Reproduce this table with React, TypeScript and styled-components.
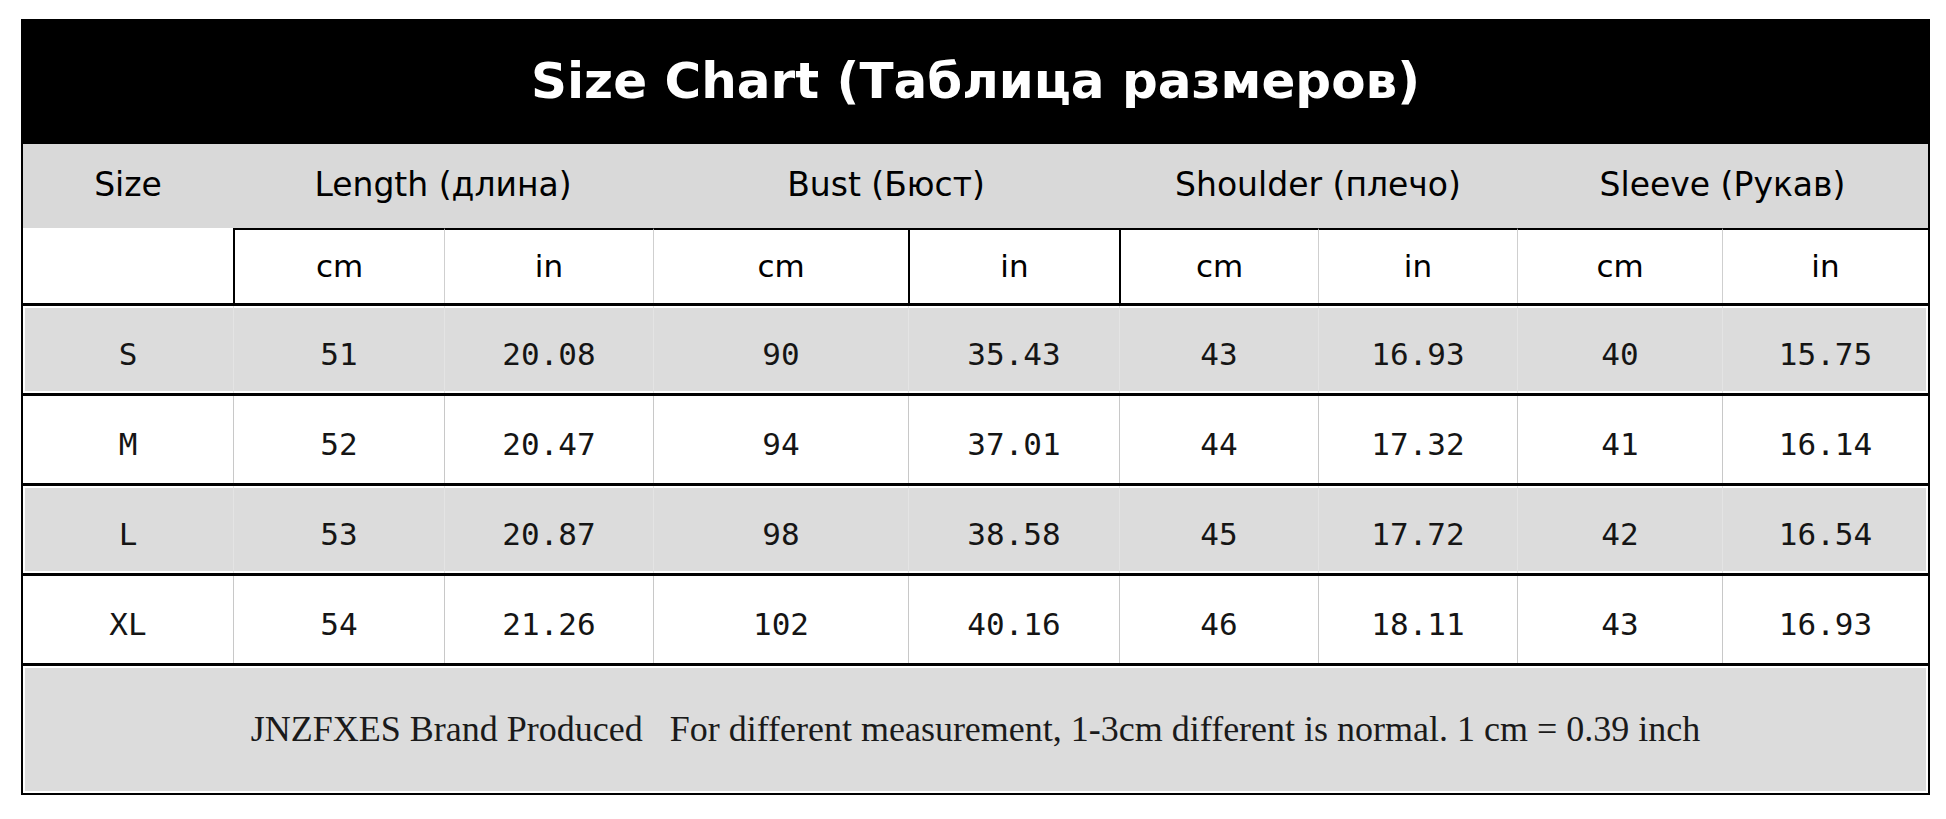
import styled, { createGlobalStyle } from "styled-components";

const GlobalStyle = createGlobalStyle`
  html, body {
    margin: 0;
    padding: 0;
    background: #ffffff;
  }
  * {
    box-sizing: border-box;
  }
`;

const COLS = "210px 211px 209px 255px 211px 199px 199px 205px 206px";

const Page = styled.div`
  padding: 19px 0 0 21px;
  width: 1946px;
  height: 819px;
  background: #ffffff;
`;

const Chart = styled.div`
  width: 1909px;
  border: 2px solid #000;
  display: flex;
  flex-direction: column;
`;

const TitleBar = styled.div`
  height: 123px;
  background: #000;
  color: #fff;
  display: flex;
  align-items: center;
  justify-content: center;
  font-family: "Comic Sans MS", "DejaVu Sans", sans-serif;
  font-weight: bold;
  font-size: 50px;
  padding-bottom: 4px;
`;

const Row = styled.div<{ $bg: string; $height: number }>`
  display: grid;
  grid-template-columns: ${COLS};
  height: ${(p) => p.$height}px;
  background: ${(p) => p.$bg};
`;

const GroupHead = styled.div<{ $span: number }>`
  grid-column: span ${(p) => p.$span};
  display: flex;
  align-items: center;
  justify-content: center;
  font-family: "Comic Sans MS", "DejaVu Sans", sans-serif;
  font-size: 33px;
  color: #000;
  padding-bottom: 4px;
`;

const UnitRow = styled(Row)`
  border-bottom: 3px solid #000;
`;

const BlankCell = styled.div`
  background: #fff;
`;

const UnitCell = styled.div<{ $line: string }>`
  display: flex;
  align-items: center;
  justify-content: center;
  border-top: 2px solid #000;
  border-left: ${(p) => (p.$line === "#000" ? "2px" : "1px")} solid ${(p) => p.$line};
  font-family: "DejaVu Sans", sans-serif;
  font-size: 31px;
  color: #000;
  padding-bottom: 2px;
`;

const DataRow = styled(Row)<{ $shaded: boolean }>`
  border-bottom: 3px solid #000;
  box-shadow: ${(p) => (p.$shaded ? "inset 0 2px 0 #fff, inset 0 -2px 0 #fff, inset 2px 0 0 #fff, inset -2px 0 0 #fff" : "none")};
`;

const DataCell = styled.div<{ $first: boolean; $shaded: boolean }>`
  display: flex;
  align-items: center;
  justify-content: center;
  border-left: ${(p) => (p.$first ? "none" : `1px solid ${p.$shaded ? "#e4e4e4" : "#c8c8c8"}`)};
  font-family: "DejaVu Sans Mono", "Liberation Mono", monospace;
  font-size: 31px;
  color: #151515;
  padding-top: 8px;
`;

const Footer = styled.div`
  height: 127px;
  background: #dcdcdc;
  box-shadow: inset 0 2px 0 #fff, inset 0 -2px 0 #fff, inset 2px 0 0 #fff, inset -2px 0 0 #fff;
  display: flex;
  align-items: center;
  justify-content: center;
  font-family: "Liberation Serif", serif;
  font-size: 36px;
  color: #1a1a1a;
  white-space: pre;
  padding-bottom: 2px;
`;

const units = [
  { u: "cm", line: "#000" },
  { u: "in", line: "#cfcfcf" },
  { u: "cm", line: "#cfcfcf" },
  { u: "in", line: "#000" },
  { u: "cm", line: "#000" },
  { u: "in", line: "#cfcfcf" },
  { u: "cm", line: "#cfcfcf" },
  { u: "in", line: "#cfcfcf" },
];

const rows = [
  ["S", "51", "20.08", "90", "35.43", "43", "16.93", "40", "15.75"],
  ["M", "52", "20.47", "94", "37.01", "44", "17.32", "41", "16.14"],
  ["L", "53", "20.87", "98", "38.58", "45", "17.72", "42", "16.54"],
  ["XL", "54", "21.26", "102", "40.16", "46", "18.11", "43", "16.93"],
];

export default function App() {
  return (
    <Page>
      <GlobalStyle />
      <Chart>
        <TitleBar>Size Chart (Таблица размеров)</TitleBar>
        <Row $bg="#d9d9d9" $height={84}>
          <GroupHead $span={1}>Size</GroupHead>
          <GroupHead $span={2}>Length (длина)</GroupHead>
          <GroupHead $span={2}>Bust (Бюст)</GroupHead>
          <GroupHead $span={2}>Shoulder (плечо)</GroupHead>
          <GroupHead $span={2}>Sleeve (Рукав)</GroupHead>
        </Row>
        <UnitRow $bg="#fff" $height={78}>
          <BlankCell />
          {units.map((c, i) => (
            <UnitCell key={i} $line={c.line}>
              {c.u}
            </UnitCell>
          ))}
        </UnitRow>
        {rows.map((r, i) => {
          const shaded = i % 2 === 0;
          return (
            <DataRow key={r[0]} $bg={shaded ? "#dcdcdc" : "#fff"} $height={90} $shaded={shaded}>
              {r.map((v, j) => (
                <DataCell key={j} $first={j === 0} $shaded={shaded}>
                  {v}
                </DataCell>
              ))}
            </DataRow>
          );
        })}
        <Footer>
          {"JNZFXES Brand Produced   For different measurement, 1-3cm different is normal. 1 cm = 0.39 inch"}
        </Footer>
      </Chart>
    </Page>
  );
}
